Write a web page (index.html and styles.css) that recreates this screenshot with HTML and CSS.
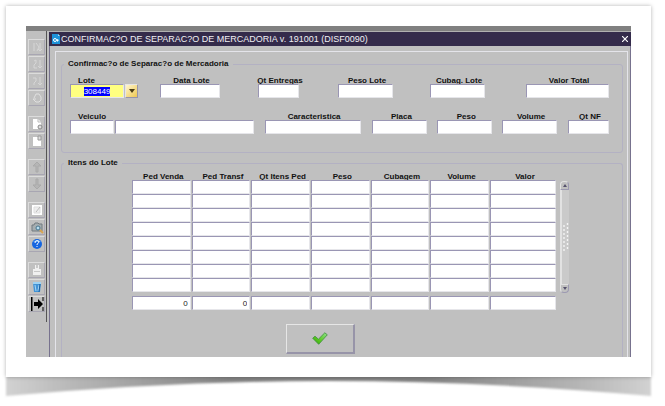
FILE: index.html
```html
<!DOCTYPE html>
<html lang="pt-BR">
<head>
    <meta charset="UTF-8">
    <meta name="viewport" content="width=device-width, initial-scale=1.0">
    <link rel="stylesheet" href="styles.css">
    <title>DISF0090</title>
</head>
<body>

<div class="sheet">
    <div class="app">
        <div class="toolbar">
            <div class="tool-group">
                <button class="tool" type="button" aria-label="Entrar consulta"><svg viewBox="0 0 14 14"><path d="M4 3v8M6 3l3 4-2 4M10 3v8M8 9l2 2 2-2" stroke="#d6d6d6" fill="none"/></svg></button>
                <button class="tool" type="button" aria-label="Consulta anterior"><svg viewBox="0 0 14 14"><path d="M4 4l2-1v3l-2 2v3h3M10 3v8M8 9l2 2 2-2" stroke="#d6d6d6" fill="none"/></svg></button>
                <button class="tool" type="button" aria-label="Executar consulta"><svg viewBox="0 0 14 14"><path d="M3 4h3v3l-2 2v2M10 3v8M8 9l2 2 2-2" stroke="#d6d6d6" fill="none"/></svg></button>
                <button class="tool" type="button" aria-label="Cancelar consulta"><svg viewBox="0 0 14 14"><path d="M4 7l2-4h3l2 3v3l-2 2H6L3 8h3" stroke="#e0e0e0" fill="none"/></svg></button>
            </div>
            <div class="tool-group">
                <button class="tool" type="button" aria-label="Novo registro"><svg viewBox="0 0 14 14"><path d="M3 2h5l3 3v7H3z" fill="#fff"/><path d="M8 2v3h3" stroke="#bbb" fill="none"/><circle cx="10" cy="10" r="2" fill="#ddd" stroke="#888"/></svg></button>
                <button class="tool" type="button" aria-label="Remover registro"><svg viewBox="0 0 14 14"><path d="M3 3h7l1 1v8H3z" fill="#fff"/><path d="M8 2h3v4H8z" fill="#ddd" stroke="#999"/></svg></button>
            </div>
            <div class="tool-group">
                <button class="tool" type="button" aria-label="Registro anterior"><svg viewBox="0 0 14 14"><path d="M7 2l4 4H8v6H6V6H3z" fill="#b5b5b5" stroke="#a9a9a9"/></svg></button>
                <button class="tool" type="button" aria-label="Registro seguinte"><svg viewBox="0 0 14 14"><path d="M7 12l4-4H8V2H6v6H3z" fill="#b5b5b5" stroke="#a9a9a9"/></svg></button>
            </div>
            <div class="tool-group">
                <button class="tool" type="button" aria-label="Editar"><svg viewBox="0 0 14 14"><path d="M2 2h10v10H2z" fill="#fff"/><path d="M4 4h6v6H4z" fill="#eee" stroke="#ddd"/><path d="M6 9l4-5" stroke="#bbb"/></svg></button>
                <button class="tool" type="button" aria-label="Capturar tela"><svg viewBox="0 0 14 14"><path d="M2 5h2l1-2h3l1 1h3v7H2z" fill="#a5adb0" stroke="#727b80"/><circle cx="8" cy="8" r="2" fill="#b9def0" stroke="#46748e"/><path d="M10 10l3 3" stroke="#d9a451" stroke-width="2"/></svg></button>
                <button class="tool" type="button" aria-label="Ajuda"><svg viewBox="0 0 14 14"><circle cx="7" cy="7" r="5" fill="#1565e0"/><path d="M3 5a5 5 0 0 1 8 0z" fill="#65a8f5"/><path d="M5 6c0-3 4-3 4-1 0 1-2 1-2 3M7 9v1" stroke="#fff" fill="none"/></svg></button>
            </div>
            <div class="tool-group">
                <button class="tool" type="button" aria-label="Salvar"><svg viewBox="0 0 14 14"><path d="M3 6h8v6H3zM5 2h4v4H5z" fill="#f0f0f0"/><path d="M6 2h2v3H6zM4 8h6v1H4z" fill="#c8c8c8"/></svg></button>
                <button class="tool" type="button" aria-label="Limpar"><svg viewBox="0 0 14 14"><path d="M3 3h8l-1 9H4z" fill="#4193d6"/><path d="M3 2h8v2H3z" fill="#9fd2f2"/><path d="M5 5l1 6M9 5l-1 6" stroke="#a6d6f7"/><path d="M10 4l-1 8" stroke="#1c5f9f"/></svg></button>
                <button class="tool" type="button" aria-label="Sair"><svg viewBox="0 0 14 14"><path d="M1 0h1.500v14H1z"/><path d="M4 5h4V2l5 5-5 5V9H4z"/><path d="M13 0v4M13 10v4" stroke="#000"/></svg></button>
            </div>
        </div>

        <div class="window">
            <div class="titlebar">
                <svg class="app-icon" viewBox="0 0 8 10"><path d="M0 0h6l2 2v8H0z" fill="#1d92d8"/><path d="M6 0v2h2z" fill="#a8dcf8"/><circle cx="3" cy="6" r="1.5" fill="none" stroke="#fff"/><path d="M5 5l2 1-2 2z" fill="#fff"/></svg>
                <span class="title">CONFIRMAC?O DE SEPARAC?O DE MERCADORIA v. 191001 (DISF0090)</span>
                <button class="close" type="button" aria-label="Fechar"><svg viewBox="0 0 6 6"><path d="M0 0l6 6M6 0L0 6" stroke="#fff" stroke-width="1.2"/></svg></button>
            </div>
            <div class="window-body">
                <form class="frame">
                    <fieldset class="panel header-panel">
                        <legend>Confirmac?o de Separac?o de Mercadoria</legend>
                        <div class="row row-lote">
                            <div class="field w-lote start">
                                <label for="lote">Lote</label>
                                <div class="combo">
                                    <input class="lote" type="text" id="lote" value="308449" autofocus>
                                    <button class="drop" type="button" aria-label="Lista de lotes"><svg viewBox="0 0 6 4"><path d="M0 0h6L3 4z" fill="#4a3c14"/></svg></button>
                                </div>
                            </div>
                            <div class="field w-date">
                                <label for="dataLote">Data Lote</label>
                                <input type="text" id="dataLote">
                            </div>
                            <div class="field w-small">
                                <label for="qtEntregas">Qt Entregas</label>
                                <input type="text" id="qtEntregas">
                            </div>
                            <div class="field w-medium">
                                <label for="pesoLote">Peso Lote</label>
                                <input type="text" id="pesoLote">
                            </div>
                            <div class="field w-medium">
                                <label for="cubagLote">Cubag. Lote</label>
                                <input type="text" id="cubagLote">
                            </div>
                            <div class="field w-total">
                                <label for="valorTotal">Valor Total</label>
                                <input type="text" id="valorTotal">
                            </div>
                        </div>
                        <div class="row row-veiculo">
                            <div class="field w-veiculo start">
                                <label for="veiculo">Veiculo</label>
                                <div class="combo">
                                    <input class="code" type="text" id="veiculo">
                                    <input type="text" aria-label="Descricao do veiculo">
                                </div>
                            </div>
                            <div class="field w-carac">
                                <label for="caracteristica">Caracteristica</label>
                                <input type="text" id="caracteristica">
                            </div>
                            <div class="field w-medium">
                                <label for="placa">Placa</label>
                                <input type="text" id="placa">
                            </div>
                            <div class="field w-medium">
                                <label for="peso">Peso</label>
                                <input type="text" id="peso">
                            </div>
                            <div class="field w-medium">
                                <label for="volume">Volume</label>
                                <input type="text" id="volume">
                            </div>
                            <div class="field w-small">
                                <label for="qtNf">Qt NF</label>
                                <input type="text" id="qtNf">
                            </div>
                        </div>
                    </fieldset>

                    <fieldset class="panel items-panel">
                        <legend>Itens do Lote</legend>
                        <div class="grid-area">
                            <table class="items">
                                <thead>
                                    <tr>
                                        <th>Ped Venda</th>
                                        <th>Ped Transf</th>
                                        <th>Qt Itens Ped</th>
                                        <th>Peso</th>
                                        <th>Cubagem</th>
                                        <th>Volume</th>
                                        <th class="last">Valor</th>
                                    </tr>
                                </thead>
                                <tbody id="itemRows"></tbody>
                                <tfoot>
                                    <tr>
                                        <td><input type="text" value="0" aria-label="Total Ped Venda"></td>
                                        <td><input type="text" value="0" aria-label="Total Ped Transf"></td>
                                        <td><input type="text" aria-label="Total Qt Itens Ped"></td>
                                        <td><input type="text" aria-label="Total Peso"></td>
                                        <td><input type="text" aria-label="Total Cubagem"></td>
                                        <td><input type="text" aria-label="Total Volume"></td>
                                        <td><input type="text" aria-label="Total Valor"></td>
                                    </tr>
                                </tfoot>
                            </table>
                            <div class="scrollbar">
                                <button class="scroll-up" type="button" aria-label="Subir"><svg viewBox="0 0 4 3"><path d="M0 3h4L2 0z" fill="#55516b"/></svg></button>
                                <div class="track">
                                    <svg class="grip" viewBox="0 0 6 28"><path d="M1 2v26" stroke="#f4f4f4" stroke-width="1.4" stroke-dasharray="2 2"/><path d="M4.500 0v26" stroke="#f4f4f4" stroke-width="1.4" stroke-dasharray="2 2"/></svg>
                                </div>
                                <button class="scroll-down" type="button" aria-label="Descer"><svg viewBox="0 0 4 3"><path d="M0 0h4L2 3z" fill="#55516b"/></svg></button>
                            </div>
                        </div>
                        <div class="actions">
                            <button class="confirm" type="button" aria-label="Confirmar">
                                <svg viewBox="0 0 16 13">
                                    <defs>
                                        <linearGradient id="check" x1="0" y1="1" x2="1" y2="0">
                                            <stop offset="0" stop-color="#2f9a10"/>
                                            <stop offset=".4" stop-color="#58c81e"/>
                                            <stop offset="1" stop-color="#8fe08c"/>
                                        </linearGradient>
                                    </defs>
                                    <path d="M.7 6.200L3 4.200l3.400 3L12.800.8l2.500 2L6.700 12.300z" fill="url(#check)" stroke="#3d8f3a" stroke-width=".8" stroke-linejoin="round"/>
                                </svg>
                            </button>
                        </div>
                    </fieldset>
                </form>
            </div>
        </div>
    </div>
</div>
<svg class="sheet-shadow" viewBox="0 0 649 24" preserveAspectRatio="none">
    <defs>
        <linearGradient id="fade">
            <stop offset="0" stop-color="#d2d2d2"/>
            <stop offset=".1" stop-color="#b8b8b8"/>
            <stop offset=".35" stop-color="#828282"/>
            <stop offset=".65" stop-color="#828282"/>
            <stop offset=".9" stop-color="#b8b8b8"/>
            <stop offset="1" stop-color="#d2d2d2"/>
        </linearGradient>
        <filter id="soft" x="-5%" y="-20%" width="110%" height="140%"><feGaussianBlur stdDeviation="1"/></filter>
    </defs>
    <path d="M2-6H647V19Q480 4 324 4T2 19z" fill="url(#fade)" filter="url(#soft)"/>
</svg>

<script>
const columns = ['Ped Venda', 'Ped Transf', 'Qt Itens Ped', 'Peso', 'Cubagem', 'Volume', 'Valor'];
const itemRows = document.getElementById('itemRows');

for (let i = 1; i <= 8; i++) {
    const row = document.createElement('tr');
    row.innerHTML = columns.map(name => `<td><input type="text" aria-label="${name} ${i}"></td>`).join('');
    itemRows.appendChild(row);
}

const lote = document.getElementById('lote');
lote.focus();
lote.select();
</script>
</body>
</html>
```

FILE: styles.css
```css
* {
    box-sizing: border-box;
}
body {
    margin: 0;
    background: #fff;
    font-family: "Liberation Sans", Arial, sans-serif;
    font-size: 8px;
    line-height: 8px;
    color: #111;
}
button {
    display: flex;
    justify-content: center;
    align-items: center;
    padding: 0;
    border: 1px solid;
    border-color: #e6e6e6 #9794a8 #9794a8 #e6e6e6;
    background: #c0c0c0;
}
.sheet {
    position: relative;
    z-index: 1;
    margin: 6px 14px 0 6px;
    padding: 20px;
    background: #fff;
    box-shadow: 0 0 4px rgba(0, 0, 0, 0.3);
}
.sheet-shadow {
    display: block;
    width: calc(100% - 16px);
    height: 24px;
    margin-left: 4px;
}
.app {
    display: flex;
    border-top: 5px solid #808080;
    background: #c0c0c0;
}

/* left icon bar */
.toolbar {
    display: flex;
    flex-direction: column;
    align-self: flex-start;
    gap: 10px;
    width: 21px;
    padding: 8px 2px 10px;
    border-right: 1px solid #555;
}
.tool-group {
    display: flex;
    flex-direction: column;
    gap: 1px;
}
.tool {
    width: 17px;
    height: 16px;
    border-color: #dcdcdc #a8a6b2 #a8a6b2 #dcdcdc;
}
.tool svg {
    width: 14px;
    height: 14px;
}

/* window */
.window {
    flex: 1;
    margin-left: 2px;
    border-top: 1px solid #b0b0b0;
}
.titlebar {
    display: flex;
    align-items: center;
    height: 14px;
    padding: 0 3px;
    background: #342b4b;
    color: #f0f0f4;
    font-size: 9px;
    line-height: 14px;
}
.app-icon {
    width: 8px;
    height: 10px;
    margin-right: 1px;
}
.title {
    flex: 1;
    white-space: nowrap;
}
.close {
    border: none;
    background: none;
}
.close svg {
    width: 6px;
    height: 6px;
}
.window-body {
    padding: 5px 2px 0 5px;
    border: 1px solid #77728e;
    border-width: 0 1px;
}
.frame {
    padding: 8px 4px 0 5px;
    border: 1px solid #e4e4ea;
    border-bottom: none;
}

/* panels */
.panel {
    min-width: 0;
    margin: 0;
    border: 1px solid #b3b1c3;
    border-radius: 3px;
}
.panel legend {
    margin-left: -6px;
    padding: 0 4px;
    font-weight: bold;
}
.header-panel {
    margin-bottom: 6px;
    padding: 9px 13px 18px 8px;
}
.items-panel {
    padding: 6px 0 3px 8px;
    border-bottom: none;
    border-radius: 3px 3px 0 0;
}

/* fields */
input {
    display: block;
    position: relative;
    width: 100%;
    height: 14px;
    padding: 0 2px;
    border: 1px solid;
    border-color: #9a96b4 #e6e6ea #e6e6ea #9a96b4;
    border-radius: 0;
    background: #fff;
    font-family: inherit;
    font-size: 8px;
    color: #222;
    outline: none;
}
label {
    margin-bottom: -1px;
    padding-left: 3px;
    font-weight: bold;
    white-space: nowrap;
}
.row {
    display: grid;
}
.row-lote {
    grid-template-columns: 90fr 98fr 80fr 92fr 96fr 83fr;
    margin-bottom: 15px;
}
.row-veiculo {
    grid-template-columns: 195fr 108fr 65fr 65fr 66fr 40fr;
}
.field {
    display: flex;
    flex-direction: column;
    align-items: center;
}
.start {
    align-items: stretch;
}
.start label {
    padding-left: 8px;
}
.w-lote { width: 68px; }
.w-date { width: 60px; }
.w-small { width: 41px; }
.w-medium { width: 55px; }
.w-total { width: 83px; }
.w-veiculo { width: 184px; }
.w-carac { width: 96px; }
.combo {
    display: flex;
    gap: 1px;
}
.combo .code {
    flex: none;
    width: 44px;
}
.lote {
    background: #ffff80;
    text-align: center;
}
.lote::selection {
    background: #0000ff;
    color: #fff;
}
.drop {
    flex: none;
    width: 13px;
    height: 14px;
    background: linear-gradient(135deg, #fff6d0, #eec850);
}
.drop svg {
    width: 6px;
    height: 4px;
}

/* items grid */
.grid-area {
    display: flex;
    margin: 0 53px 0 62px;
}
.items {
    flex: 1;
    width: 100%;
    table-layout: fixed;
    border-collapse: collapse;
}
.items th {
    height: 7px;
    padding: 0 0 0 3px;
    line-height: 7px;
    white-space: nowrap;
}
.items .last {
    width: 67px;
}
.items td {
    padding: 0 1px 0 0;
}
.items tfoot td {
    padding-top: 4px;
}
.items tfoot input {
    text-align: right;
}
.scrollbar {
    display: flex;
    flex-direction: column;
    width: 9px;
    margin: 8px 0 17px 3px;
}
.scrollbar button {
    width: 9px;
    height: 9px;
    border-color: #e2e2e2 #9d9ab2 #9d9ab2 #e2e2e2;
}
.scrollbar button svg {
    width: 4px;
    height: 3px;
}
.scroll-up {
    border-radius: 4px 4px 0 0;
}
.scroll-down {
    border-radius: 0 0 4px 4px;
}
.track {
    display: flex;
    flex: 1;
    justify-content: center;
    align-items: center;
    border-left: 2px solid #e2e2e2;
    background: #cacaca;
}
.grip {
    width: 6px;
    height: 28px;
}

.actions {
    display: flex;
    justify-content: center;
    margin-top: 14px;
    padding-right: 52px;
}
.confirm {
    width: 69px;
    height: 30px;
    border-width: 1px 2px 2px 1px;
}
.confirm svg {
    width: 16px;
    height: 13px;
}
```
